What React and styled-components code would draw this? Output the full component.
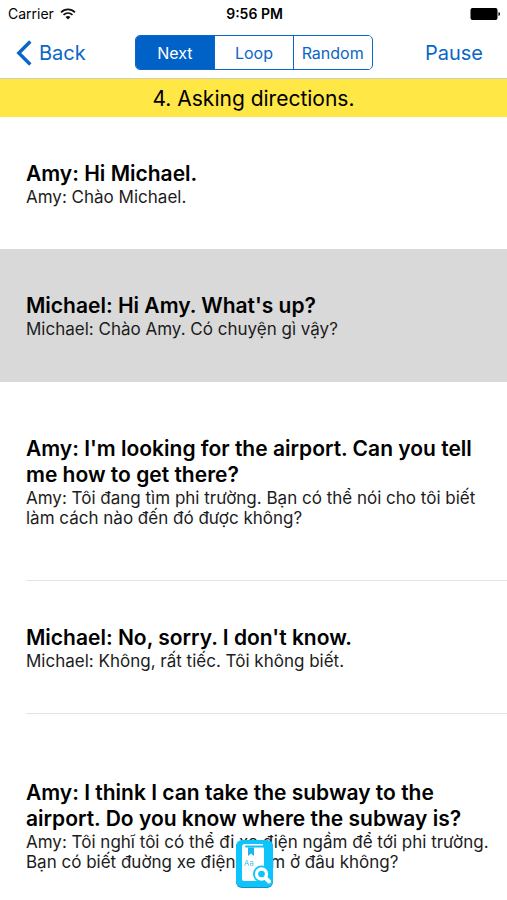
import React, { useState } from 'react'
import styled, { createGlobalStyle } from 'styled-components';

/**** Styles ****/
const GlobalStyle = createGlobalStyle`
  * {
    box-sizing: border-box;
  }
  body {
    margin: 0;
    background: #fff;
    color: #000;
    font-family: Inter, 'Noto Sans', sans-serif;
  }
  button {
    margin: 0;
    padding: 0;
    border: 0;
    background: none;
    font-family: inherit;
    cursor: pointer;
  }
`

const Screen = styled.main`
  position: relative;
  display: flex;
  flex-direction: column;
  height: 100vh;
  overflow: hidden;
`

const StatusBar = styled.div`
  display: grid;
  grid-template-columns: 1fr auto 1fr;
  align-items: center;
  flex: none;
  height: 27px;
  padding: 0 6px 0 8px;
  font-size: 14px;
`

const Carrier = styled.span`
  display: flex;
  align-items: center;
  gap: 6px;
`

const Clock = styled.time`
  font-weight: 600;
`

const BatteryIcon = styled.svg`
  justify-self: end;
`

const NavBar = styled.header`
  display: grid;
  grid-template-columns: 1fr 238px 1fr;
  align-items: center;
  flex: none;
  height: 52px;
  border-bottom: 1px solid #d2cfc0;
`

const NavButton = styled.button`
  display: flex;
  align-items: center;
  gap: 7px;
  justify-self: ${({ $end }) => ($end ? 'end' : 'start')};
  padding: 0 24px 0 16px;
  font-size: 20px;
  line-height: 26px;
  color: #0a66c8;
`

const Segments = styled.div`
  display: grid;
  grid-template-columns: repeat(3, 1fr);
  height: 35px;
  border: 1px solid #0a66c8;
  border-radius: 5px;
  overflow: hidden;
`

const Segment = styled.button`
  font-size: 16px;
  color: ${({ $active }) => ($active ? '#fff' : '#0a66c8')};
  background: ${({ $active }) => ($active ? '#0062c6' : '#fff')};
  & + & {
    border-left: 1px solid #0a66c8;
  }
`

const Title = styled.h1`
  flex: none;
  margin: 0;
  padding-top: 2px;
  background: #ffe746;
  font-size: 21px;
  font-weight: 400;
  line-height: 36px;
  text-align: center;
`

const Lines = styled.ul`
  flex: 1;
  margin: 0;
  padding: 0;
  list-style: none;
  overflow-y: auto;
  scrollbar-width: none;
`

const Line = styled.li`
  padding-left: 26px;
  background: ${({ $active }) => ($active ? '#d9d9d9' : '#fff')};
`

const LineBody = styled.div`
  padding: ${({ $space }) => $space + 2}px 16px ${({ $space }) => $space}px 0;
  border-bottom: ${({ $divider }) => ($divider ? '1px solid' : 'none')};
  border-color: ${({ $active }) => ($active ? 'transparent' : '#e4e4e6')};
`

const Phrase = styled.p`
  margin: 0;
  font-size: 21px;
  font-weight: 600;
  line-height: 26px;
`

const Translation = styled.p`
  margin: 0;
  font-size: 17px;
  line-height: 20px;
  color: #1c1c1c;
`

const DictionaryButton = styled.button`
  position: absolute;
  bottom: 12px;
  left: 50%;
  transform: translateX(-50%);
  width: 38px;
  height: 48px;
`

/**** Data ****/
const modes = ['Next', 'Loop', 'Random'];

const dialogue = [
  {
    en: 'Amy: Hi Michael.',
    vi: 'Amy: Chào Michael.',
    space: 42
  },
  {
    en: "Michael: Hi Amy. What's up?",
    vi: 'Michael: Chào Amy. Có chuyện gì vậy?',
    space: 42,
    divider: true
  },
  {
    en: "Amy: I'm looking for the airport. Can you tell me how to get there?",
    vi: 'Amy: Tôi đang tìm phi trường. Bạn có thể nói cho tôi biết làm cách nào đến đó được không?',
    space: 52,
    divider: true
  },
  {
    en: "Michael: No, sorry. I don't know.",
    vi: 'Michael: Không, rất tiếc. Tôi không biết.',
    space: 42,
    divider: true
  },
  {
    en: 'Amy: I think I can take the subway to the airport. Do you know where the subway is?',
    vi: 'Amy: Tôi nghĩ tôi có thể đi xe điện ngầm để tới phi trường. Bạn có biết đuờng xe điện ngầm ở đâu không?',
    space: 64,
    divider: true
  }
];

/**** Icons ****/
const Wifi = () => (
  <svg width="16" height="12" viewBox="0 0 16 12" fill="none" stroke="#111" strokeWidth="1.7" aria-hidden="true">
    <path d="M1 4.3C5 .3 11 .3 15 4.3" />
    <path d="M3.5 6.9c2.6-2.4 6.4-2.4 9 0" />
    <path d="M8 11.6 5.5 9c1.4-1.3 3.6-1.3 5 0z" fill="#111" stroke="none" />
  </svg>
)

const Battery = () => (
  <BatteryIcon width="31" height="12" viewBox="0 0 31 12" aria-hidden="true">
    <rect x="0.5" y="0" width="27" height="12" rx="2" fill="#000" />
    <path d="M28.5 4c2 .6 2 3.4 0 4z" fill="#000" />
  </BatteryIcon>
)

const Chevron = () => (
  <svg width="16" height="26" viewBox="0 0 16 26" fill="none" stroke="#0a66c8" strokeWidth="3.4" aria-hidden="true">
    <path d="M14.3 1.5 2.8 13l11.5 11.5" />
  </svg>
)

const Dictionary = () => (
  <svg width="38" height="48" viewBox="0 0 38 48" aria-hidden="true">
    <rect x="1" y="1" width="37" height="47" rx="6" fill="#168ec0" />
    <rect x="1" y="0" width="37" height="47" rx="6" fill="#0fc3fb" />
    <path d="M10 4h18v1.5H10.5q-1.5 1 0 2H28q1 0 1 1V41H9q-2 0-2-2V7q0-3 3-3z" fill="#fff" />
    <path d="M13 7.500h6V16l-3-2.500-3 2.500z" fill="#1eb2ee" />
    <text x="9" y="26" fontFamily="Inter, sans-serif" fontSize="8" fill="#4cc5f0">Aa</text>
    <circle cx="26.5" cy="34" r="8.5" fill="#0fc3fb" />
    <path d="m31 38 4 3.5" stroke="#0fc3fb" strokeWidth="7" />
    <circle cx="26.5" cy="34" r="5" fill="#0fc3fb" stroke="#fff" strokeWidth="3.4" />
    <path d="m30.500 38 3.500 3.500" stroke="#fff" strokeWidth="4" strokeLinecap="round" />
  </svg>
)

/**** Component ****/
const App = () => {
  const [mode, setMode] = useState('Next');
  const [current, setCurrent] = useState(1);
  const [playing, setPlaying] = useState(true);

  return (
    <>
      <GlobalStyle />
      <Screen>
        <StatusBar>
          <Carrier>Carrier <Wifi /></Carrier>
          <Clock>9:56 PM</Clock>
          <Battery />
        </StatusBar>
        <NavBar>
          <NavButton><Chevron />Back</NavButton>
          <Segments role="group" aria-label="Playback mode">
            {modes.map((item) => (
              <Segment
                key={item}
                $active={item === mode}
                aria-pressed={item === mode}
                onClick={() => setMode(item)}
              >
                {item}
              </Segment>
            ))}
          </Segments>
          <NavButton $end onClick={() => setPlaying(!playing)}>{playing ? 'Pause' : 'Play'}</NavButton>
        </NavBar>
        <Title>4. Asking directions.</Title>
        <Lines>
          {dialogue.map((line, key) => (
            <Line key={key} $active={key === current} onClick={() => setCurrent(key)}>
              <LineBody $space={line.space} $divider={line.divider} $active={key === current}>
                <Phrase lang="en">{line.en}</Phrase>
                <Translation lang="vi">{line.vi}</Translation>
              </LineBody>
            </Line>
          ))}
        </Lines>
        <DictionaryButton aria-label="Dictionary"><Dictionary /></DictionaryButton>
      </Screen>
    </>
  )
}

export default App;
